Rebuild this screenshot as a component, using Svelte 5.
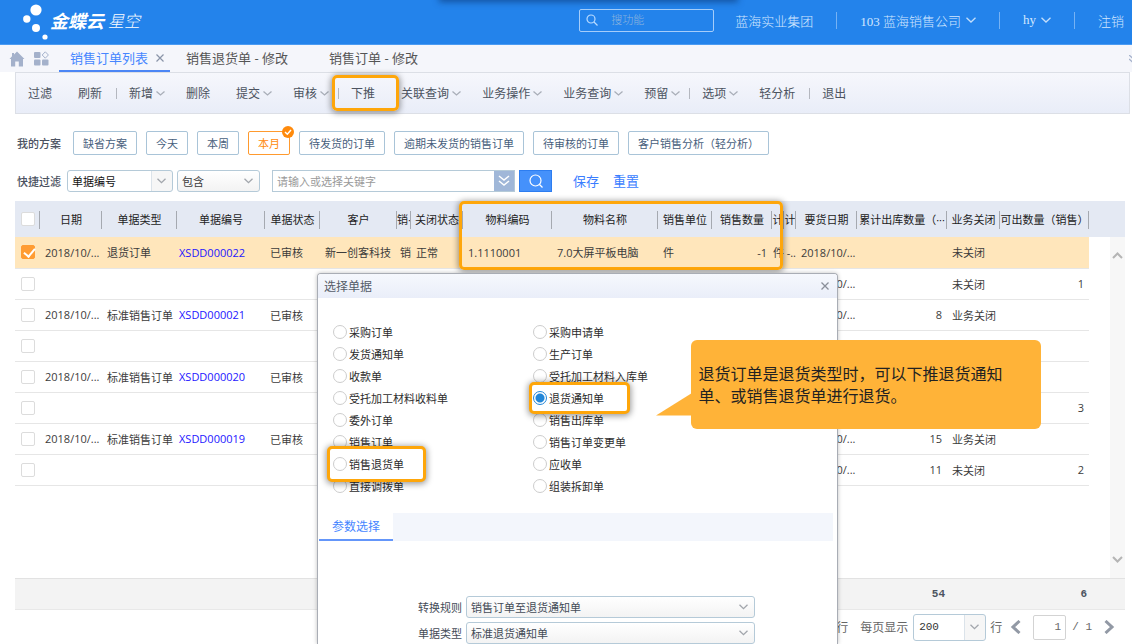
<script>
    // active document tab and the chosen target document
    let activeTab = '销售订单列表';
    let target = '退货通知单';
    let plan = '本月';
    let dialogOpen = true;

    const tabs = ['销售订单列表', '销售退货单 - 修改', '销售订单 - 修改'];

    const tools = [
        { name: '过滤' },
        { name: '刷新' },
        { sep: true },
        { name: '新增', drop: true },
        { name: '删除' },
        { name: '提交', drop: true },
        { name: '审核', drop: true },
        { sep: true },
        { name: '下推', marked: true },
        { name: '关联查询', drop: true },
        { name: '业务操作', drop: true },
        { name: '业务查询', drop: true },
        { name: '预留', drop: true },
        { sep: true },
        { name: '选项', drop: true },
        { name: '轻分析' },
        { sep: true },
        { name: '退出' }
    ];

    const plans = ['缺省方案', '今天', '本周', '本月', '待发货的订单', '逾期未发货的销售订单', '待审核的订单', '客户销售分析（轻分析）'];

    const columns = [
        { key: 'date', title: '日期', width: 62 },
        { key: 'type', title: '单据类型', width: 75 },
        { key: 'no', title: '单据编号', width: 88 },
        { key: 'status', title: '单据状态', width: 55 },
        { key: 'customer', title: '客户', width: 77 },
        { key: 'dept', title: '销·', width: 14, tight: true },
        { key: 'closed', title: '关闭状态', width: 52 },
        { key: 'code', title: '物料编码', width: 89 },
        { key: 'item', title: '物料名称', width: 106 },
        { key: 'unit', title: '销售单位', width: 54 },
        { key: 'qty', title: '销售数量', width: 60, num: true },
        { key: 'punit', title: '计', width: 12, tight: true },
        { key: 'pqty', title: '计', width: 12, tight: true },
        { key: 'due', title: '要货日期', width: 61 },
        { key: 'shipped', title: '累计出库数量（···', width: 90, num: true },
        { key: 'bizClosed', title: '业务关闭', width: 53 },
        { key: 'available', title: '可出数量（销售）', width: 89, num: true }
    ];

    let rows = [
        {
            checked: true, date: '2018/10/...', type: '退货订单', no: 'XSDD000022', status: '已审核',
            customer: '新一创客科技', dept: '销', closed: '正常', code: '1.1110001', item: '7.0大屏平板电脑',
            unit: '件', qty: '-1', punit: '件', pqty: '-..', due: '2018/10/...', bizClosed: '未关闭'
        },
        { due: '2018/10/...', bizClosed: '未关闭', available: '1' },
        { date: '2018/10/...', type: '标准销售订单', no: 'XSDD000021', status: '已审核', due: '2018/10/...', shipped: '8', bizClosed: '业务关闭' },
        {},
        { date: '2018/10/...', type: '标准销售订单', no: 'XSDD000020', status: '已审核' },
        { available: '3' },
        { date: '2018/10/...', type: '标准销售订单', no: 'XSDD000019', status: '已审核', due: '2018/10/...', shipped: '15', bizClosed: '业务关闭' },
        { due: '2018/10/...', shipped: '11', bizClosed: '未关闭', available: '2' }
    ];

    // listed row by row, two per row
    const targets = [
        '采购订单', '采购申请单',
        '发货通知单', '生产订单',
        '收款单', '受托加工材料入库单',
        '受托加工材料收料单', '退货通知单',
        '委外订单', '销售出库单',
        '销售订单', '销售订单变更单',
        '销售退货单', '应收单',
        '直接调拨单', '组装拆卸单'
    ];
    const marks = { '退货通知单': 'mark', '销售退货单': 'mark tall' };
</script>

<div class="app">
    <header>
        <div class="shade"></div>
        <div class="logo">
            <svg width="28" height="40" viewBox="0 0 28 40" fill="#fff">
                <circle cx="14" cy="10" r="5.6" />
                <circle cx="4.8" cy="19" r="3.7" />
                <circle cx="14" cy="28" r="4" />
                <circle cx="23" cy="37" r="2.6" />
            </svg>
            <strong>金蝶云</strong><span>星空</span>
        </div>
        <label class="search">
            <svg width="12" height="12" viewBox="0 0 12 12" fill="none" stroke="#b9dbff" stroke-width="1.2">
                <circle cx="5" cy="5" r="4" />
                <path d="M8 8l3.5 3.5" />
            </svg>
            <input type="text" placeholder="搜功能" aria-label="搜功能" />
        </label>
        <nav>
            <button>蓝海实业集团</button>
            <i></i>
            <button>103 蓝海销售公司
                <svg width="10" height="6" viewBox="0 0 10 6"><path d="M.5.7L5 5 9.5.7" /></svg>
            </button>
            <i></i>
            <button>hy
                <svg width="10" height="6" viewBox="0 0 10 6"><path d="M.5.7L5 5 9.5.7" /></svg>
            </button>
            <i></i>
            <a href="#logout">注销</a>
        </nav>
    </header>

    <div class="tabs">
        <button class="icon" aria-label="home">
            <svg width="16" height="16" viewBox="0 0 16 16" fill="#a4b1cb">
                <path d="M8 .5L15.5 8h-1.5V15.500H9.800V10.500H6.200V15.500H2V8H.5L3 5.300V2h2v1.400z" />
            </svg>
        </button>
        <button class="icon" aria-label="apps">
            <svg width="15" height="15" viewBox="0 0 15 15" fill="#a4b1cb">
                <rect x="0" y="1" width="6.5" height="6" rx="1" />
                <rect x="0" y="8.5" width="6.5" height="6" rx="1" />
                <rect x="8" y="8.5" width="6.5" height="6" rx="1" />
                <path d="M11.300 .8L14.400 4 11.300 7.200 8.200 4z" fill="none" stroke="#a4b1cb" />
            </svg>
        </button>
        {#each tabs as tab}
            <button class="tab" class:active={tab === activeTab} on:click={() => (activeTab = tab)}>
                {tab}
                {#if tab === activeTab}
                    <svg width="8" height="8" viewBox="0 0 8 8" stroke="#8a94a8" stroke-width="1.2"><path d="M.5.5l7 7M7.5.5l-7 7" /></svg>
                {/if}
            </button>
        {/each}
        <svg class="more" width="8" height="8" viewBox="0 0 8 8" fill="none" stroke="#a4b1cb" stroke-width="1.3"><path d="M0 0l4 3.500L8 0M0 4l4 3.500L8 4" /></svg>
    </div>

    <div class="toolbar">
        {#each tools as tool}
            {#if tool.sep}
                <i></i>
            {:else}
                <button class:drop={tool.drop} class:marked={tool.marked}>
                    {tool.name}
                    {#if tool.drop}
                        <svg width="9" height="5" viewBox="0 0 9 5"><path d="M.5.5l4 3.500 4-3.500" /></svg>
                    {/if}
                </button>
            {/if}
        {/each}
    </div>

    <div class="plans">
        <b>我的方案</b>
        {#each plans as p}
            <button class:current={p === plan} on:click={() => (plan = p)}>
                {p}
                {#if p === plan}
                    <svg width="12" height="12" viewBox="0 0 12 12">
                        <circle cx="6" cy="6" r="6" fill="#ff8a0c" />
                        <path d="M3 6l2.300 2.200L9 4" fill="none" stroke="#fff" stroke-width="1.5" />
                    </svg>
                {/if}
            </button>
        {/each}
    </div>

    <div class="filters">
        <label for="field">快捷过滤</label>
        <span class="select field">
            <select id="field"><option>单据编号</option></select>
            <svg width="9" height="6" viewBox="0 0 9 6"><path d="M.5.7l4 4 4-4" /></svg>
        </span>
        <span class="select op">
            <select aria-label="条件"><option>包含</option></select>
            <svg width="9" height="6" viewBox="0 0 9 6"><path d="M.5.7l4 4 4-4" /></svg>
        </span>
        <div class="keyword">
            <input type="text" placeholder="请输入或选择关键字" aria-label="关键字" />
            <button aria-label="more">
                <svg width="12" height="12" viewBox="0 0 12 12" fill="none" stroke="#fff" stroke-width="1.5"><path d="M1 1l5 4 5-4M1 6l5 4 5-4" /></svg>
            </button>
        </div>
        <button class="go" aria-label="search">
            <svg width="14" height="14" viewBox="0 0 14 14" fill="none" stroke="#fff" stroke-width="1.2">
                <circle cx="6.5" cy="6.5" r="5.5" />
                <path d="M10.500 10.500l3 3" />
            </svg>
        </button>
        <a href="#save">保存</a>
        <a href="#reset">重置</a>
    </div>

    <div class="grid">
        <div class="head-fill"></div>
        <table>
            <colgroup>
                <col style="width: 25px" />
                {#each columns as col}
                    <col style="width: {col.width}px" />
                {/each}
            </colgroup>
            <thead>
                <tr>
                    <th><input type="checkbox" aria-label="全选" /></th>
                    {#each columns as col}
                        <th>{col.title}</th>
                    {/each}
                </tr>
            </thead>
            <tbody>
                {#each rows as row, i}
                    <tr class:selected={row.checked}>
                        <td class="check"><input type="checkbox" bind:checked={row.checked} aria-label="行 {i + 1}" /></td>
                        {#each columns as col}
                            <td class:num={col.num} class:link={col.key === 'no'} class:tight={col.tight}>
                                {#if col.key === 'no' && row.no}
                                    <a href="#{row.no}">{row.no}</a>
                                {:else}
                                    {row[col.key] ?? ''}
                                {/if}
                            </td>
                        {/each}
                    </tr>
                {/each}
            </tbody>
        </table>
        <div class="scroll">
            <svg width="11" height="7" viewBox="0 0 11 7"><path d="M1 6l4.500-4.500L10 6" /></svg>
            <svg width="11" height="7" viewBox="0 0 11 7"><path d="M1 1l4.500 4.500L10 1" /></svg>
        </div>
        <div class="frame"></div>
    </div>

    <div class="totals"><span>54</span><span>6</span></div>

    <footer>
        <span>行</span>
        <label for="size">每页显示</label>
        <span class="select size">
            <select id="size"><option>200</option></select>
            <svg width="9" height="6" viewBox="0 0 9 6"><path d="M.5.7l4 4 4-4" /></svg>
        </span>
        <span class="unit">行</span>
        <button aria-label="prev"><svg width="11" height="14" viewBox="0 0 11 14"><path d="M9.500 1L3 7l6.500 6" /></svg></button>
        <input type="text" value="1" aria-label="page" />
        <span class="count">/ 1</span>
        <button aria-label="next"><svg width="11" height="14" viewBox="0 0 11 14"><path d="M1.500 1L8 7l-6.500 6" /></svg></button>
    </footer>

    {#if dialogOpen}
        <div class="dialog" role="dialog" aria-label="选择单据">
            <div class="title">
                <span>选择单据</span>
                <button aria-label="close" on:click={() => (dialogOpen = false)}>
                    <svg width="8" height="8" viewBox="0 0 8 8" stroke="#8a8f99" stroke-width="1.3"><path d="M.5.5l7 7M7.5.5l-7 7" /></svg>
                </button>
            </div>
            <div class="targets">
                {#each targets as name}
                    <div>
                        <label class={marks[name] ?? ''}>
                            <input type="radio" name="target" value={name} bind:group={target} />{name}
                        </label>
                    </div>
                {/each}
            </div>
            <div class="strip"><button>参数选择</button></div>
            <div class="params">
                <label for="rule">转换规则</label>
                <span class="select">
                    <select id="rule"><option>销售订单至退货通知单</option></select>
                    <svg width="9" height="6" viewBox="0 0 9 6"><path d="M.5.7l4 4 4-4" /></svg>
                </span>
                <label for="kind">单据类型</label>
                <span class="select">
                    <select id="kind"><option>标准退货通知单</option></select>
                    <svg width="9" height="6" viewBox="0 0 9 6"><path d="M.5.7l4 4 4-4" /></svg>
                </span>
            </div>
        </div>
    {/if}

    <div class="tip">
        <svg width="36" height="24" viewBox="0 0 36 24"><path d="M36 0L0 22.500H36z" fill="#ffb338" /></svg>
        退货订单是退货类型时，可以下推退货通知单、或销售退货单进行退货。
    </div>
</div>

<style>
    :global(body) {
        background: #fff;
        overflow: hidden;
    }

    .app {
        position: relative;
        display: flex;
        flex-direction: column;
        height: 100vh;
        overflow: hidden;
        font-family: "Open Sans", "Noto Sans CJK SC", sans-serif;
        font-size: 11px;
        color: #3c3c3c;
    }

    .app :global(*) {
        box-sizing: border-box;
    }

    button, input, select {
        font: inherit;
        color: inherit;
        margin: 0;
        padding: 0;
        border: none;
        background: none;
        outline: none;
    }

    button {
        white-space: nowrap;
    }

    a {
        text-decoration: none;
    }

    svg {
        flex: none;
    }

    /* top bar */
    header {
        position: relative;
        flex: none;
        display: flex;
        align-items: center;
        height: 45px;
        padding: 0 8px 4px 22px;
        background: #2383eb;
        border-bottom: 1px solid #4b9bf2;
        color: #d3e7ff;
        font-family: "Liberation Serif", "Noto Sans CJK SC", serif;
        font-size: 13px;
        font-weight: 300;
    }

    .shade {
        position: absolute;
        top: -4px;
        left: 39%;
        right: 35%;
        height: 4px;
        box-shadow: 0 0 6px 2px rgba(10, 50, 110, 0.6);
    }

    .logo {
        flex: 1;
        display: flex;
        align-items: center;
        color: #fff;
        font-style: italic;
        font-size: 16px;
    }

    .logo strong {
        font-size: 18px;
        font-weight: 700;
        margin-right: 4px;
    }

    .search {
        display: flex;
        align-items: center;
        width: 135px;
        height: 23px;
        padding-left: 6px;
        margin-right: 21px;
        gap: 13px;
        border: 1px solid #a5cdfa;
        border-radius: 2px;
        font-size: 11px;
    }

    .search input {
        width: 90px;
    }

    .search input::placeholder {
        color: #8fb4dd;
    }

    nav {
        display: flex;
        align-items: center;
        gap: 23px;
    }

    nav button {
        display: flex;
        align-items: center;
        gap: 5px;
    }

    nav a {
        color: inherit;
    }

    nav i {
        width: 1px;
        height: 17px;
        background: #76b2f4;
    }

    nav svg path {
        fill: none;
        stroke: #c3defb;
        stroke-width: 1.3;
    }

    /* document tabs */
    .tabs {
        position: relative;
        flex: none;
        display: flex;
        align-items: center;
        height: 27px;
        padding-left: 9px;
        background: #f5f6fb;
        font-size: 13px;
        color: #555;
    }

    .tabs .icon {
        display: flex;
        width: 25px;
    }

    .tab {
        display: flex;
        align-items: center;
        height: 27px;
        min-width: 143px;
        padding: 0 16px;
        border-bottom: 2px solid transparent;
    }

    .tab.active {
        min-width: 0;
        padding: 0 6px 0 11px;
        gap: 8px;
        color: #4686ff;
        border-color: #4c86f5;
    }

    .more {
        margin-left: auto;
        margin-right: -5px;
    }

    .toolbar {
        flex: none;
        display: flex;
        align-items: center;
        height: 42px;
        margin: 0 2px 0 15px;
        padding-left: 12px;
        border: 1px solid #dcdfe6;
        background: linear-gradient(#f6f7fc, #e9edf8);
        font-size: 12px;
        color: #4c5360;
    }

    .toolbar button {
        position: relative;
        display: flex;
        align-items: center;
        gap: 3px;
        margin-right: 26px;
    }

    .toolbar .drop {
        margin-right: 21px;
    }

    .toolbar i {
        width: 1px;
        height: 11px;
        margin: 0 12px 0 -12px;
        background: #b4b7bf;
    }

    .toolbar path {
        fill: none;
        stroke: #a9aeb8;
        stroke-width: 1.3;
    }

    .marked::after, .frame {
        content: "";
        position: absolute;
        border: 3px solid #fea60a;
        border-radius: 5px;
        box-shadow: 0 1px 6px 1px rgba(0, 0, 0, 0.4);
    }

    .marked::after {
        inset: -9px -24px -9px -19px;
    }

    /* saved schemes */
    .plans {
        flex: none;
        display: flex;
        align-items: center;
        gap: 9px;
        padding: 17px 17px 0;
        color: #47607c;
    }

    .plans b, .filters label {
        width: 47px;
        color: #4a5160;
        font-weight: 500;
    }

    .plans button {
        position: relative;
        height: 24px;
        padding: 0 9px;
        border: 1px solid #a9c4d8;
        border-radius: 2px;
    }

    .plans .current {
        border-color: #ff9a2e;
        color: #ff8a0c;
    }

    .plans svg {
        position: absolute;
        top: -6px;
        right: -5px;
    }

    .filters {
        flex: none;
        display: flex;
        align-items: center;
        padding: 15px 17px 9px;
    }

    .filters label {
        width: 50px;
    }

    .select {
        position: relative;
        display: flex;
        align-items: center;
        height: 22px;
        border: 1px solid #b5cad8;
        border-radius: 3px;
        background: linear-gradient(#fff, #f3f3f3);
    }

    .select select {
        appearance: none;
        width: 100%;
        height: 100%;
        padding-left: 4px;
    }

    .select svg {
        position: absolute;
        right: 6px;
        pointer-events: none;
    }

    .select path {
        fill: none;
        stroke: #a2a6ac;
        stroke-width: 1.3;
    }

    .field, .size {
        background: linear-gradient(to left, #f6f6f6 20px, #dbe3ea 20px, #dbe3ea 21px, #fff 21px);
    }

    .field {
        width: 106px;
        margin-right: 4px;
        color: #111;
    }

    .op {
        width: 83px;
        margin-right: 12px;
    }

    .keyword {
        display: flex;
        width: 243px;
        height: 22px;
        margin-right: 4px;
        border: 1px solid #b5cad8;
    }

    .keyword input {
        flex: 1;
        min-width: 0;
        padding-left: 4px;
    }

    .keyword input::placeholder {
        color: #9a9a9a;
    }

    .keyword button {
        display: grid;
        place-items: center;
        width: 20px;
        background: #a0b7d8;
    }

    .go {
        display: grid;
        place-items: center;
        width: 33px;
        height: 22px;
        margin-right: 7px;
        border: 1px solid #2d7df0;
        background: #4591fb;
    }

    .filters a {
        margin-left: 14px;
        font-size: 13px;
        line-height: 18px;
        color: #3a7dff;
    }

    /* order list */
    .grid {
        position: relative;
        flex: 1;
        margin: 0 7px 0 15px;
    }

    .head-fill {
        position: absolute;
        width: 100%;
        height: 36px;
        background: #e4e9f3;
    }

    table {
        position: relative;
        width: 1074px;
        table-layout: fixed;
        border-collapse: collapse;
    }

    th, td {
        padding: 0 5px;
        overflow: hidden;
        white-space: nowrap;
        text-align: left;
    }

    th {
        position: relative;
        height: 36px;
        padding: 0;
        font-weight: 400;
        text-align: center;
        color: #222;
    }

    th::after {
        content: "";
        position: absolute;
        top: 10px;
        right: 0;
        width: 1px;
        height: 18px;
        background: #a5a9b0;
    }

    th:first-child, .check {
        padding: 0 0 0 6px;
        text-align: left;
    }

    td {
        height: 31px;
        border-bottom: 1px solid #e6e6e6;
    }

    .num {
        text-align: right;
    }

    .link {
        padding: 0 2px;
    }

    .tight {
        padding: 0;
        text-align: right;
    }

    td a {
        color: #2416ff;
    }

    .selected {
        background: #ffe6bb;
    }

    input[type="checkbox"] {
        appearance: none;
        display: block;
        width: 14px;
        height: 14px;
        border: 1px solid #dcdcdc;
        border-radius: 2px;
        background: #fff;
    }

    input[type="checkbox"]:checked {
        border-color: #ff9c33;
        background: #ff9c33;
    }

    input[type="checkbox"]:checked::after {
        content: "";
        display: block;
        width: 5px;
        height: 9px;
        margin-left: 4px;
        border: solid #fff;
        border-width: 0 2px 2px 0;
        transform: rotate(40deg);
    }

    .scroll {
        position: absolute;
        top: 36px;
        right: 0;
        bottom: 0;
        width: 15px;
        display: flex;
        flex-direction: column;
        align-items: center;
        justify-content: space-between;
        padding: 15px 0;
        background: #f7f7f7;
    }

    .scroll path {
        fill: none;
        stroke: #b5b5b5;
        stroke-width: 2;
    }

    .frame {
        top: 0;
        left: 444px;
        width: 324px;
        height: 69px;
    }

    .totals {
        flex: none;
        display: flex;
        justify-content: flex-end;
        align-items: center;
        height: 32px;
        margin: 0 7px 0 15px;
        padding-right: 38px;
        border-top: 1px solid #e2e2e2;
        border-bottom: 1px solid #e8e8e8;
        background: #f3f3f3;
        font-family: "Liberation Mono", monospace;
        font-weight: 700;
        color: #4c5360;
    }

    .totals span {
        width: 142px;
        text-align: right;
    }

    footer {
        flex: none;
        display: flex;
        align-items: center;
        height: 34px;
        padding-right: 17px;
        justify-content: flex-end;
        font-family: "Liberation Mono", "Noto Sans CJK SC", monospace;
        font-size: 12px;
        color: #666;
    }

    footer label {
        margin: 0 5px 0 12px;
    }

    footer .size {
        width: 73px;
        height: 27px;
        font-size: 11px;
        color: #333;
    }

    footer .size select {
        padding-left: 5px;
    }

    footer .unit {
        margin: 0 8px 0 4px;
    }

    footer button {
        display: flex;
    }

    footer button path {
        fill: none;
        stroke: #9299a5;
        stroke-width: 3;
    }

    footer input {
        width: 33px;
        height: 25px;
        margin: 0 6px 0 12px;
        padding-right: 4px;
        border: 1px solid #d3d3d3;
        border-radius: 2px;
        text-align: right;
        font-size: 11px;
    }

    .count {
        margin-right: 12px;
        font-size: 11px;
    }

    /* push-down dialog */
    .dialog {
        position: absolute;
        top: 273px;
        bottom: 0;
        left: 28%;
        width: 46%;
        overflow: hidden;
        border: 1px solid #a9adb5;
        border-bottom: none;
        border-radius: 4px 4px 0 0;
        box-shadow: 0 0 4px rgba(0, 0, 0, 0.25);
        background: #fff;
        color: #2c2c2c;
    }

    .title {
        display: flex;
        align-items: center;
        justify-content: space-between;
        height: 24px;
        padding: 0 8px 0 6px;
        background: linear-gradient(#f6f8fd, #eaeef9);
        font-size: 12px;
        color: #555c68;
    }

    .title button {
        display: flex;
    }

    .targets {
        display: grid;
        grid-template-columns: 200px 1fr;
        grid-auto-rows: 22px;
        padding: 23px 0 0 15px;
    }

    .targets label {
        position: relative;
        display: inline-flex;
        align-items: center;
        gap: 2px;
        height: 22px;
    }

    .mark::before {
        content: "";
        position: absolute;
        inset: -5px -26px -5px -4px;
        z-index: -1;
        border: 3px solid #fea60a;
        border-radius: 5px;
        box-shadow: 0 1px 6px 1px rgba(0, 0, 0, 0.4);
        background: #fff;
    }

    .targets .mark {
        z-index: 1;
    }

    .targets .tall::before {
        inset: -7px -22px -7px -6px;
    }

    input[type="radio"] {
        appearance: none;
        width: 14px;
        height: 14px;
        border: 1px solid #cdcdcd;
        border-radius: 50%;
        background: #fff;
    }

    input[type="radio"]:checked {
        border-color: #2186d8;
        background: radial-gradient(circle, #2186d8 4px, #fff 5px);
    }

    .strip {
        margin: 16px 4px 0 1px;
        background: #f3f6fc;
    }

    .strip button {
        height: 28px;
        width: 74px;
        border-bottom: 2px solid #6496fa;
        background: #fff;
        font-size: 12px;
        color: #4686ff;
    }

    .params {
        display: grid;
        grid-template-columns: 144px 289px;
        align-items: center;
        gap: 4px;
        padding-top: 55px;
        color: #444b57;
    }

    .params label {
        text-align: right;
    }

    /* callout */
    .tip {
        position: absolute;
        top: 340px;
        left: 61%;
        width: 31%;
        height: 89px;
        padding: 23px 32px 0 8px;
        border-radius: 6px;
        background: #ffb338;
        font-size: 16px;
        line-height: 22px;
        color: #222;
    }

    .tip svg {
        position: absolute;
        left: -35px;
        top: 53px;
    }
</style>
